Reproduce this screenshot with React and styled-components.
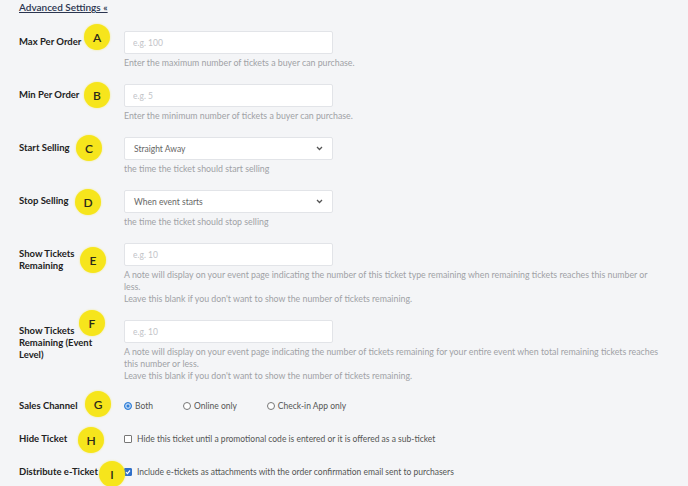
import React from 'react';
import styled, { createGlobalStyle } from 'styled-components';

const GlobalStyle = createGlobalStyle`
  html, body {
    margin: 0;
    padding: 0;
    background: #f4f5f7;
    font-family: Lato, "Open Sans", sans-serif;
  }
`;

const Page = styled.div`
  padding: 0 0 0 19px;
  min-height: 486px;
  box-sizing: border-box;
`;

const AdvancedLink = styled.a`
  display: block;
  width: fit-content;
  margin-top: 1px;
  font-size: 10px;
  line-height: 12px;
  color: #2b3550;
  text-decoration: underline;
  font-weight: 600;
`;

const Form = styled.div`
  display: flex;
  flex-direction: column;
  gap: 15px;
  margin-top: 18px;
`;

const Row = styled.div`
  position: relative;
  display: grid;
  grid-template-columns: 105px 1fr;
  align-items: ${p => (p.$inline ? 'center' : 'start')};
  min-height: ${p => (p.$inline ? '18px' : '0')};
`;

const Label = styled.div`
  font-size: 9.5px;
  line-height: 12px;
  font-weight: 700;
  color: #222;
  padding-top: ${p => (p.$inline ? '0' : '5px')};
  padding-right: 12px;
`;

const Field = styled.div`
  display: flex;
  flex-direction: column;
`;

const Input = styled.input`
  box-sizing: border-box;
  width: 209px;
  height: 23px;
  border: 1px solid #e2e4e8;
  border-radius: 2px;
  background: #fff;
  padding: 0 8px;
  font-family: inherit;
  font-size: 8.5px;
  color: #444;
  outline: none;
  &::placeholder {
    color: #c2c4c8;
  }
`;

const SelectBox = styled.div`
  position: relative;
  box-sizing: border-box;
  width: 209px;
  height: 23px;
  border: 1px solid #e2e4e8;
  border-radius: 2px;
  background: #fff;
  display: flex;
  align-items: center;
  padding: 0 9px;
  font-size: 8.5px;
  color: #666;
  justify-content: space-between;
`;

const Help = styled.div`
  margin-top: 3px;
  max-width: 537px;
  font-size: 8.8px;
  line-height: 12px;
  color: #a0a2a6;
`;

const Options = styled.div`
  display: flex;
  align-items: center;
  gap: 30px;
`;

const Option = styled.label`
  display: flex;
  align-items: center;
  gap: 3px;
  font-size: 8.5px;
  color: #555;
`;

const Radio = styled.span`
  box-sizing: border-box;
  width: 8px;
  height: 8px;
  border-radius: 50%;
  border: 1px solid ${p => (p.$on ? '#2f7fd8' : '#777')};
  background: ${p => (p.$on ? '#2f7fd8' : '#fff')};
  box-shadow: ${p => (p.$on ? 'inset 0 0 0 1.5px #bcd6f5' : 'none')};
`;

const Check = styled.span`
  box-sizing: border-box;
  width: 8px;
  height: 8px;
  border-radius: 1px;
  border: 1px solid ${p => (p.$on ? '#2f6fc9' : '#777')};
  background: ${p => (p.$on ? '#2f6fc9' : '#fff')};
  margin-right: 2px;
  display: flex;
  align-items: center;
  justify-content: center;
`;

const Badge = styled.span`
  position: absolute;
  width: 26px;
  height: 26px;
  border-radius: 50%;
  background: #f6e51c;
  box-shadow: 0 0 2px rgba(246, 229, 28, 0.6);
  color: #2a2a1a;
  font-size: 12px;
  font-weight: 600;
  display: flex;
  align-items: center;
  justify-content: center;
  transform: translate(-50%, -50%);
  z-index: 1;
`;

const Chevron = () => (
  <svg width="7" height="5" viewBox="0 0 7 5">
    <path d="M1 1l2.5 2.5L6 1" fill="none" stroke="#555" strokeWidth="1.3" />
  </svg>
);

const Tick = () => (
  <svg width="6" height="6" viewBox="0 0 6 6">
    <path d="M1 3.2l1.4 1.4L5 1.5" fill="none" stroke="#fff" strokeWidth="1.2" />
  </svg>
);

// badge centres are offsets from the row's left/top (x from page edge minus padding)
const Mark = ({ letter, x, y }) => (
  <Badge style={{ left: x - 19, top: y }}>{letter}</Badge>
);

export default function App() {
  return (
    <Page>
      <GlobalStyle />
      <AdvancedLink href="#">Advanced Settings «</AdvancedLink>

      <Form>
        <Row>
          <Label>Max Per Order</Label>
          <Field>
            <Input placeholder="e.g. 100" />
            <Help>Enter the maximum number of tickets a buyer can purchase.</Help>
          </Field>
          <Mark letter="A" x={97} y={6} />
        </Row>

        <Row>
          <Label>Min Per Order</Label>
          <Field>
            <Input placeholder="e.g. 5" />
            <Help>Enter the minimum number of tickets a buyer can purchase.</Help>
          </Field>
          <Mark letter="B" x={97} y={11} />
        </Row>

        <Row>
          <Label>Start Selling</Label>
          <Field>
            <SelectBox>
              <span>Straight Away</span>
              <Chevron />
            </SelectBox>
            <Help>the time the ticket should start selling</Help>
          </Field>
          <Mark letter="C" x={89} y={11} />
        </Row>

        <Row>
          <Label>Stop Selling</Label>
          <Field>
            <SelectBox>
              <span>When event starts</span>
              <Chevron />
            </SelectBox>
            <Help>the time the ticket should stop selling</Help>
          </Field>
          <Mark letter="D" x={88} y={12} />
        </Row>

        <Row>
          <Label>Show Tickets Remaining</Label>
          <Field>
            <Input placeholder="e.g. 10" />
            <Help>
              A note will display on your event page indicating the number of this ticket type remaining when remaining tickets reaches this number or less.
              <br />
              Leave this blank if you don't want to show the number of tickets remaining.
            </Help>
          </Field>
          <Mark letter="E" x={93} y={17} />
        </Row>

        <Row>
          <Label>Show Tickets Remaining (Event Level)</Label>
          <Field>
            <Input placeholder="e.g. 10" />
            <Help>
              A note will display on your event page indicating the number of tickets remaining for your entire event when total remaining tickets reaches this number or less.
              <br />
              Leave this blank if you don't want to show the number of tickets remaining.
            </Help>
          </Field>
          <Mark letter="F" x={92} y={3} />
        </Row>

        <Row $inline>
          <Label $inline>Sales Channel</Label>
          <Options>
            <Option><Radio $on />Both</Option>
            <Option><Radio />Online only</Option>
            <Option><Radio />Check-in App only</Option>
          </Options>
          <Mark letter="G" x={98} y={7} />
        </Row>

        <Row $inline>
          <Label $inline>Hide Ticket</Label>
          <Option>
            <Check />
            Hide this ticket until a promotional code is entered or it is offered as a sub-ticket
          </Option>
          <Mark letter="H" x={91} y={10} />
        </Row>

        <Row $inline>
          <Label $inline>Distribute e-Ticket</Label>
          <Option>
            <Check $on><Tick /></Check>
            Include e-tickets as attachments with the order confirmation email sent to purchasers
          </Option>
          <Mark letter="I" x={112} y={11} />
        </Row>
      </Form>
    </Page>
  );
}
